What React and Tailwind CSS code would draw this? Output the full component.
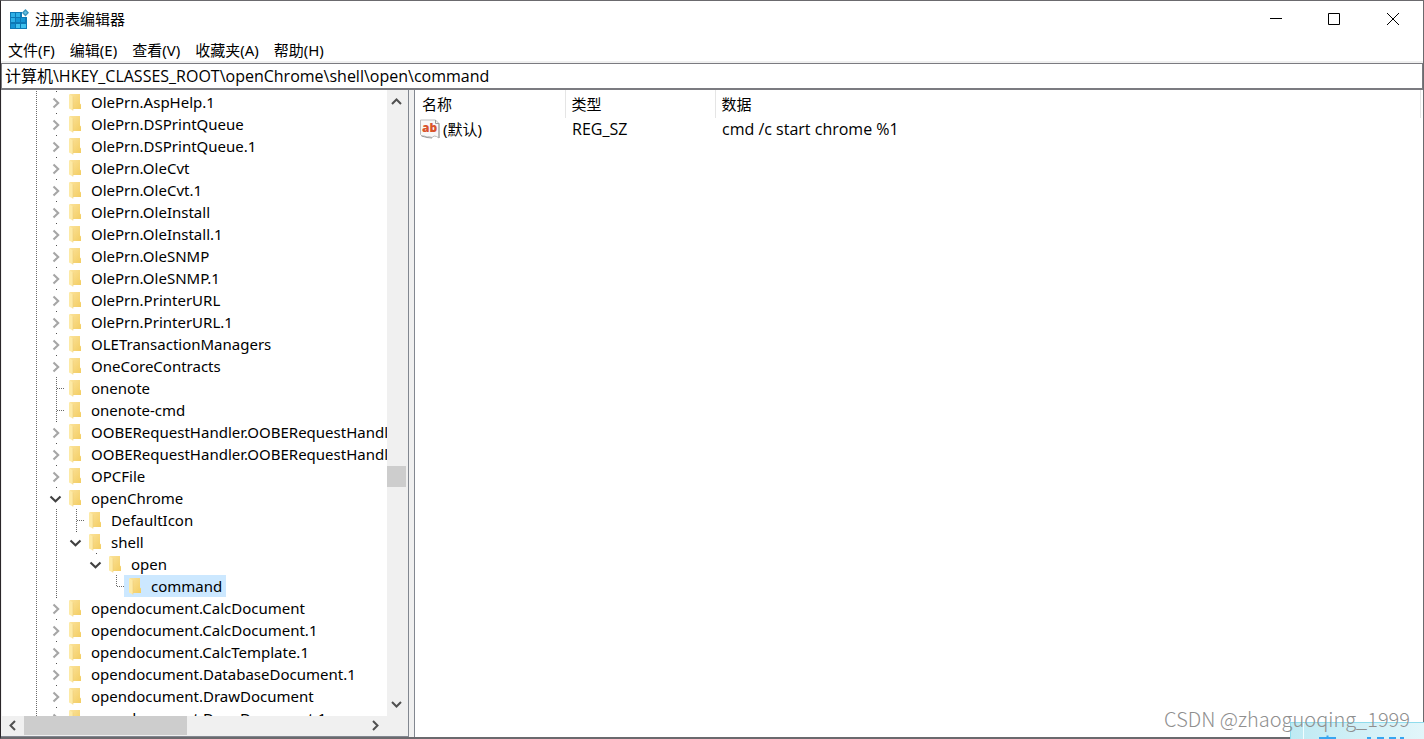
import React from "react";

const MENU = ["文件(F)", "编辑(E)", "查看(V)", "收藏夹(A)", "帮助(H)"];

// guides: one entry per indent cell left of the node; node: state of the node's own cell
const ROWS = [
  ..."OlePrn.AspHelp.1,OlePrn.DSPrintQueue,OlePrn.DSPrintQueue.1,OlePrn.OleCvt,OlePrn.OleCvt.1,OlePrn.OleInstall,OlePrn.OleInstall.1,OlePrn.OleSNMP,OlePrn.OleSNMP.1,OlePrn.PrinterURL,OlePrn.PrinterURL.1,OLETransactionManagers,OneCoreContracts"
    .split(",")
    .map((name) => ({ name, guides: [1], node: "closed" })),
  { name: "onenote", guides: [1], node: "leaf" },
  { name: "onenote-cmd", guides: [1], node: "leaf" },
  { name: "OOBERequestHandler.OOBERequestHandler", guides: [1], node: "closed" },
  { name: "OOBERequestHandler.OOBERequestHandler.1", guides: [1], node: "closed" },
  { name: "OPCFile", guides: [1], node: "closed" },
  { name: "openChrome", guides: [1], node: "open", stub: true },
  { name: "DefaultIcon", guides: [1, 1], node: "leaf" },
  { name: "shell", guides: [1, 1], node: "open", stub: true },
  { name: "open", guides: [1, 1, 0], node: "open", stub: true },
  { name: "command", guides: [1, 1, 0, 0], node: "last", selected: true },
  ..."opendocument.CalcDocument,opendocument.CalcDocument.1,opendocument.CalcTemplate.1,opendocument.DatabaseDocument.1,opendocument.DrawDocument,opendocument.DrawDocument.1"
    .split(",")
    .map((name) => ({ name, guides: [1], node: "closed" })),
];

function Guide({ on }) {
  return (
    <svg className="h-[22px] w-5 shrink-0" viewBox="0 0 20 22" aria-hidden="true">
      {on ? <path d="M10.5 0V22" stroke="#6a6a6a" strokeDasharray="1 1" /> : null}
    </svg>
  );
}

function NodeMark({ type, stub }) {
  return (
    <svg className="h-[22px] w-[18px] shrink-0" viewBox="0 0 18 22" fill="none" aria-hidden="true">
      {type === "closed" && (
        <>
          <path d="M10.5 0V1" stroke="#505050" />
          <path d="M7.5 7.5L12.2 12L7.5 16.5" stroke="#a6a6a6" strokeWidth="2.1" />
        </>
      )}
      {type === "open" && (
        <>
          {stub && <path d="M10.5 0V1" stroke="#505050" />}
          <path d="M4.5 9.5L9.5 14.2L14.5 9.5" stroke="#404040" strokeWidth="2.1" />
        </>
      )}
      {type === "leaf" && (
        <path d="M10.5 0V22M11 11.5H19" stroke="#6a6a6a" strokeDasharray="1 1" />
      )}
      {type === "last" && (
        <path d="M10.5 0V12M11 11.5H19" stroke="#6a6a6a" strokeDasharray="1 1" />
      )}
    </svg>
  );
}

function Folder() {
  return (
    <svg className="h-[18px] w-3 shrink-0" viewBox="0 0 12 18" aria-hidden="true">
      <defs>
        <linearGradient id="folderBody" x1="0" y1="0" x2="1" y2="1">
          <stop offset="0" stopColor="#fbe29a" />
          <stop offset="1" stopColor="#f3cd62" />
        </linearGradient>
      </defs>
      <path d="M1 1H11V10.5L12 11.5V16H2Z" fill="url(#folderBody)" />
      <path d="M0 1L4 3.500V17.500L0 15.500Z" fill="#fdeaa6" />
      <path d="M4 3.500V17.500" stroke="#efce78" strokeWidth=".6" />
    </svg>
  );
}

function Chevron({ d }) {
  return (
    <svg className="h-5 w-5" viewBox="0 0 20 20" fill="none" aria-hidden="true">
      <path d={d} stroke="#505050" strokeWidth="2" />
    </svg>
  );
}

function RegistryIcon() {
  return (
    <svg className="h-5 w-5" viewBox="0 0 20 20" aria-hidden="true">
      <path d="M1 3H13V8H18V20H1Z" fill="#0d78b5" />
      <path d="M2 4H6V8H2ZM7 4H11V8H7ZM2 9H6V13H2Z" fill="#2fb0e6" />
      <path d="M7 9H11V13H7ZM12 9H16V13H12ZM2 15H6V19H2Z" fill="#1594d4" />
      <path d="M7 15H11V19H7ZM12 15H17V19H12Z" fill="#3fc0ee" />
      <path d="M16.500 0L20 3.800L16.500 7.600L12.800 3.800Z" fill="#3a93bd" />
      <path d="M16.500 2L18.200 3.800L16.500 5.600L14.700 3.800Z" fill="#62bfe2" />
    </svg>
  );
}

function StringValueIcon() {
  return (
    <svg className="h-5 w-5 shrink-0" viewBox="0 0 20 20" aria-hidden="true">
      <path
        d="M.5 1H15.500L19 4.500V19L16.500 17.500Q14 16 12 18.500Q9 17 7 18Q4 16.500 2 17L.5 15.500Z"
        fill="#f8f8f8"
        stroke="#bcbcbc"
      />
      <path d="M15.500 1V4.500H19V19M1.500 17L7 18.500L12 19" fill="none" stroke="#9c9c9c" />
      <text x="2" y="13" fontFamily="Open Sans" fontWeight="800" fontSize="12" fill="#d9532c">ab</text>
    </svg>
  );
}

const CAPTION = [
  { label: "最小化", d: "M4 9.5H16" },
  { label: "最大化", d: "M4.500 4.500H15.500V15.500H4.500Z" },
  { label: "关闭", d: "M5 4L17 16M17 4L5 16" },
];

export default function App() {
  return (
    <div className="relative h-screen overflow-hidden">
      <div className="flex h-full flex-col border border-b-2 border-[#6b6a6e] border-l-[#2a2629] bg-white font-['Noto_Sans','Noto_Sans_CJK_SC',sans-serif] text-[15px] leading-[22px] text-black">
        <header className="flex h-9 shrink-0 items-center pl-2 pr-0.5">
          <RegistryIcon />
          <h1 className="grow pl-1.5">注册表编辑器</h1>
          {CAPTION.map(({ label, d }) => (
            <button key={label} aria-label={label} className="flex w-[58px] justify-center">
              <svg className="h-5 w-5" viewBox="0 0 20 20" fill="none" stroke="#000" aria-hidden="true">
                <path d={d} />
              </svg>
            </button>
          ))}
        </header>

        <nav className="flex h-6 shrink-0 items-center gap-[15px] pl-[7px] pt-0.5">
          {MENU.map((m) => (
            <button key={m}>{m}</button>
          ))}
        </nav>

        <div className="shrink-0 border-t-2 border-[#f0f0f0]">
          <input
            aria-label="地址"
            className="block h-[27px] w-full border border-b-2 border-[#7b7b80] px-[3px] pb-0.5 font-['Open_Sans','Noto_Sans_CJK_SC',sans-serif] text-base leading-[22px] outline-none"
            defaultValue="计算机\HKEY_CLASSES_ROOT\openChrome\shell\open\command"
          />
        </div>

        <main className="flex min-h-0 grow gap-[5px] bg-[#f0f0f0]">
          <section className="flex w-[408px] shrink-0 flex-col border-b border-r border-[#828790] bg-[#f0f0f0] px-px">
            <div className="flex min-h-0 grow">
              <ul
                role="tree"
                aria-label="注册表项"
                className="min-w-0 grow overflow-hidden bg-white pl-6 pt-px"
              >
                {ROWS.map((r) => (
                  <li key={r.name} role="treeitem" aria-selected={!!r.selected} className="flex h-[22px]">
                    {r.guides.map((g, i) => (
                      <Guide key={i} on={g} />
                    ))}
                    <NodeMark type={r.node} stub={r.stub} />
                    <button
                      className={`flex shrink-0 items-center gap-2.5 whitespace-nowrap pl-[5px] pr-1 ${r.selected ? "bg-[#cce8ff]" : ""}`}
                    >
                      <Folder />
                      {r.name}
                    </button>
                  </li>
                ))}
              </ul>
              <div className="flex w-5 shrink-0 flex-col">
                <button aria-label="向上滚动"><Chevron d="M5 14L9.500 9.500L14 14" /></button>
                <div className="grow-[355]" />
                <div className="mr-px h-[21px] bg-[#cdcdcd]" />
                <div className="grow-[208]" />
                <button aria-label="向下滚动"><Chevron d="M5 6L9.500 10.500L14 6" /></button>
              </div>
            </div>
            <div className="flex h-5 shrink-0 pr-[21px]">
              <button aria-label="向左滚动"><Chevron d="M13 5L8.500 9.500L13 14" /></button>
              <div className="flex grow pl-0.5">
                <div className="h-[19px] w-[163px] bg-[#cdcdcd]" />
              </div>
              <button aria-label="向右滚动"><Chevron d="M7 5L11.500 9.500L7 14" /></button>
            </div>
          </section>

          <section className="min-w-0 grow border-l border-[#828790] bg-white pr-0.5">
            <table className="w-full table-fixed border-collapse text-left">
              <thead>
                <tr className="h-7">
                  <th className="w-[150px] border-r border-[#e5e5e5] pl-[7px] font-normal">名称</th>
                  <th className="w-[150px] border-r border-[#e5e5e5] pl-1.5 font-normal">类型</th>
                  <th className="border-r border-[#e5e5e5] pl-1.5 font-normal">数据</th>
                </tr>
              </thead>
              <tbody>
                <tr className="h-[22px]">
                  <td className="pl-[5px]">
                    <span className="flex items-center gap-[3px]">
                      <StringValueIcon />
                      (默认)
                    </span>
                  </td>
                  <td className="pl-[7px] font-['Open_Sans',sans-serif] text-base leading-[22px]">REG_SZ</td>
                  <td className="pl-[7px] font-['Open_Sans',sans-serif] text-base leading-[22px]">cmd /c start chrome %1</td>
                </tr>
              </tbody>
            </table>
          </section>
        </main>
      </div>

      <div className="absolute bottom-0 right-0 h-[17px] w-[134px] overflow-hidden border-l border-t border-[#8fdcec] bg-gradient-to-r from-[#bfeaf3] to-[#e2f6fa]">
        <svg className="h-4 w-[133px]" viewBox="0 0 133 16" aria-hidden="true">
          <path d="M12.500 0V16" stroke="#f2fcfe" />
          <path d="M28 15H45M36.500 12.500V16M76 15H80M86 15H93M98 15H105M109 15H113" stroke="#38a6f0" strokeWidth="2" />
        </svg>
      </div>
      <p className="absolute bottom-2 right-3.5 font-['Noto_Sans_CJK_SC',sans-serif] text-xl font-light leading-6 text-[#8f8f8f]">
        CSDN @zhaoguoqing_1999
      </p>
    </div>
  );
}
